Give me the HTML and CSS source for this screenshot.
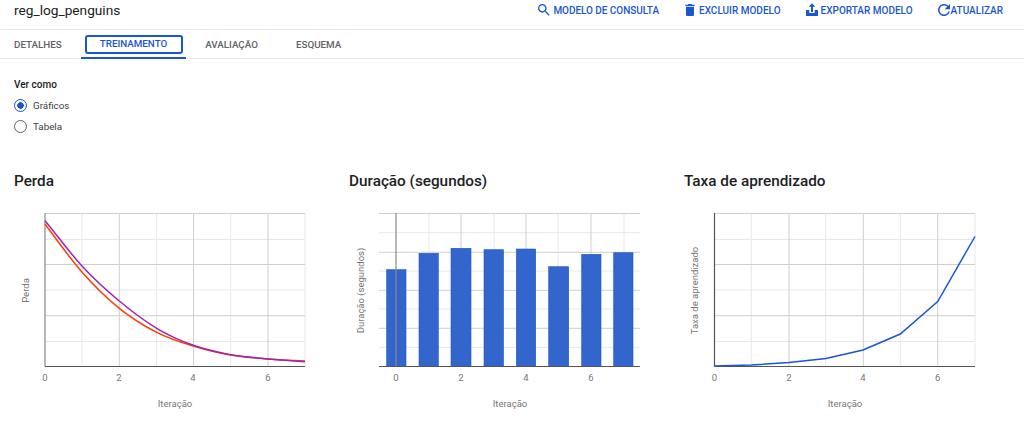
FILE: index.html
```html
<!DOCTYPE html>
<html lang="pt">
<head>
  <meta charset="UTF-8">
  <title>reg_log_penguins</title>
  <link rel="stylesheet" href="styles.css">
</head>
<body>
  <header class="topbar">
    <div class="model-name">reg_log_penguins</div>
    <div class="actions">
      <a class="action action-query"><svg viewBox="0 0 24 24"><path d="M15.5 14h-.79l-.28-.27C15.41 12.59 16 11.11 16 9.5 16 5.91 13.09 3 9.5 3S3 5.91 3 9.5 5.91 16 9.5 16c1.61 0 3.09-.59 4.23-1.57l.27.28v.79l5 4.99L20.49 19l-4.99-5zm-6 0C7.01 14 5 11.99 5 9.5S7.01 5 9.5 5 14 7.01 14 9.5 11.99 14 9.5 14z"/></svg>MODELO DE CONSULTA</a>
      <a class="action"><svg viewBox="0 0 24 24"><path d="M6 19c0 1.1.9 2 2 2h8c1.1 0 2-.9 2-2V7H6v12zM19 4h-3.5l-1-1h-5l-1 1H5v2h14V4z"/></svg>EXCLUIR MODELO</a>
      <a class="action"><svg viewBox="0 0 24 24"><path d="M12 2L7 7h3.5v8h3V7H17l-5-5zM3 12h5v4.5h8V12h5v9H3v-9z"/></svg>EXPORTAR MODELO</a>
      <a class="action action-refresh"><svg viewBox="0 0 24 24"><path d="M17.65 6.35C16.2 4.9 14.21 4 12 4c-4.42 0-7.99 3.58-7.99 8s3.57 8 7.99 8c3.73 0 6.84-2.55 7.73-6h-2.08c-.82 2.33-3.04 4-5.65 4-3.31 0-6-2.69-6-6s2.69-6 6-6c1.66 0 3.14.69 4.22 1.78L13 11h7V4l-2.35 2.35z"/></svg>ATUALIZAR</a>
    </div>
  </header>

  <nav class="tabs">
    <div class="tab tab-first">DETALHES</div>
    <div class="tab active">TREINAMENTO</div>
    <div class="tab">AVALIAÇÃO</div>
    <div class="tab">ESQUEMA</div>
  </nav>

  <section class="view-as">
    <div class="view-label">Ver como</div>
    <div class="radio-row"><span class="radio checked"></span>Gráficos</div>
    <div class="radio-row"><span class="radio"></span>Tabela</div>
  </section>

  <main class="charts">
    <section class="chart">
      <h2>Perda</h2>
      <svg class="plot" viewBox="0 0 320 210" width="320" height="210">
        <g class="grid-minor">
          <path d="M68 8.5V161.5M142.5 8.5V161.5M216.7 8.5V161.5M291 8.5V161.5"/>
          <path d="M31 34.5H291M31 85H291M31 136.5H291"/>
        </g>
        <g class="grid-major">
          <path d="M105.3 8.5V161.5M179.6 8.5V161.5M254 8.5V161.5"/>
          <path d="M31 8.5H291M31 59.5H291M31 110.7H291"/>
        </g>
        <path class="axis-y" d="M31 8V161.5"/>
        <path class="axis-x" d="M31 161.5H291"/>
        <path class="line-red" d="M31 19C43 35 55.4 52.7 67.7 66.7C80 80.7 92.8 93.2 105.3 103.3C117.8 113.4 130.4 121 142.7 127.3C155 133.6 167 137.3 179.3 141C191.6 144.7 204.2 148 216.7 150C229.2 152 241.9 153 254.3 154C266.7 155 279 155.7 291 156"/>
        <path class="line-purple" d="M31 15.7C43 30 55.4 47.3 67.7 60.7C80 74.1 92.8 85.6 105.3 96C117.8 106.4 130.4 115.9 142.7 123.3C155 130.7 167 135.9 179.3 140.3C191.6 144.7 204.2 147.4 216.7 149.7C229.2 152 241.9 152.8 254.3 154C266.7 155.2 279 155.9 291 156.7"/>
        <g class="tick">
          <text x="31" y="175.5">0</text>
          <text x="105" y="175.5">2</text>
          <text x="179" y="175.5">4</text>
          <text x="254" y="175.5">6</text>
        </g>
        <text class="axis-title" x="161" y="202">Iteração</text>
        <text class="axis-title" transform="translate(14.5 85.5) rotate(-90)">Perda</text>
      </svg>
    </section>

    <section class="chart">
      <h2>Duração (segundos)</h2>
      <svg class="plot" viewBox="0 0 320 210" width="320" height="210">
        <g class="grid-minor">
          <path d="M80 8.5V161.5M145 8.5V161.5M209 8.5V161.5M275 8.5V161.5"/>
          <path d="M30 27.7H291M30 66H291M30 104H291M30 142.3H291"/>
        </g>
        <g class="grid-major">
          <path d="M112 8.5V161.5M177 8.5V161.5M242 8.5V161.5"/>
          <path d="M30 8.5H291M30 47.3H291M30 85.3H291M30 123.3H291"/>
        </g>
        <g class="bars">
          <rect x="37.7" y="64.7" width="19.3" height="96.8"/>
          <rect x="70" y="48.3" width="19.3" height="113.2"/>
          <rect x="102" y="43.3" width="20" height="118.2"/>
          <rect x="135" y="44.7" width="19.5" height="116.8"/>
          <rect x="167.3" y="44" width="19.4" height="117.5"/>
          <rect x="199.7" y="61.7" width="20" height="99.8"/>
          <rect x="232.7" y="49.3" width="19.3" height="112.2"/>
          <rect x="264.7" y="47.7" width="19.3" height="113.8"/>
        </g>
        <path class="axis-y" d="M47 8V161.5"/>
        <path class="axis-x" d="M30 161.5H291"/>
        <g class="tick">
          <text x="47" y="175.5">0</text>
          <text x="112" y="175.5">2</text>
          <text x="177" y="175.5">4</text>
          <text x="242" y="175.5">6</text>
        </g>
        <text class="axis-title" x="161" y="202">Iteração</text>
        <text class="axis-title" transform="translate(14.5 85.5) rotate(-90)">Duração (segundos)</text>
      </svg>
    </section>

    <section class="chart">
      <h2>Taxa de aprendizado</h2>
      <svg class="plot" viewBox="0 0 320 210" width="320" height="210">
        <g class="grid-minor">
          <path d="M67.3 8.5V161.5M141.7 8.5V161.5M216.3 8.5V161.5M291 8.5V161.5"/>
          <path d="M30.5 34.5H291M30.5 85H291M30.5 136.5H291"/>
        </g>
        <g class="grid-major">
          <path d="M105 8.5V161.5M179.3 8.5V161.5M253.7 8.5V161.5"/>
          <path d="M30.5 8.5H291M30.5 59.5H291M30.5 110.7H291"/>
        </g>
        <path class="axis-y dark" d="M30.5 8V161.5"/>
        <path class="axis-x" d="M30.5 161.5H291"/>
        <path class="line-blue" d="M30.5 161L67.5 160L105 157.5L142 153.5L179 145L216.3 129L253.7 96.5L291 31.5"/>
        <g class="tick">
          <text x="30.5" y="175.5">0</text>
          <text x="105" y="175.5">2</text>
          <text x="179" y="175.5">4</text>
          <text x="253.7" y="175.5">6</text>
        </g>
        <text class="axis-title" x="161" y="202">Iteração</text>
        <text class="axis-title" transform="translate(13.5 85.5) rotate(-90)">Taxa de aprendizado</text>
      </svg>
    </section>
  </main>
</body>
</html>
```

FILE: styles.css
```css
body {
  font-family: 'Roboto', sans-serif;
  margin: 0;
  padding: 0;
  background-color: #ffffff;
  color: #202124;
  overflow: hidden;
}
.topbar {
  display: flex;
  justify-content: space-between;
  align-items: center;
  height: 20px;
  padding: 0 21px 9px 14px;
  border-bottom: 1px solid #e6e6e6;
}
.model-name {
  font-size: 13.7px;
}
.actions {
  display: flex;
  align-items: center;
  gap: 23px;
}
.action {
  display: flex;
  align-items: center;
  font-size: 10px;
  font-weight: 500;
  color: #1a56d0;
}
.action svg {
  width: 16px;
  height: 16px;
  fill: #1a56d0;
  margin-right: 1px;
}
.action-query {
  letter-spacing: -0.05px;
}
.action-refresh svg {
  width: 18px;
  height: 18px;
  margin-left: -1px;
  margin-right: -2px;
}
.tabs {
  display: flex;
  height: 28px;
  border-bottom: 1px solid #e6e6e6;
}
.tab {
  position: relative;
  display: flex;
  align-items: center;
  padding: 0 19px;
  font-size: 9.8px;
  font-weight: 500;
  color: #5f6368;
}
.tab-first {
  padding-left: 14px;
}
.tab.active {
  color: #1a56d0;
  border-bottom: 2px solid #1a56d0;
  margin-bottom: -1px;
}
.tab.active::before {
  content: "";
  position: absolute;
  left: 4px;
  right: 3px;
  top: 5px;
  bottom: 3px;
  border: 2px solid #1a56d0;
  border-radius: 3px;
}
.view-as {
  padding: 20px 14px 0;
}
.view-label {
  font-size: 10px;
  font-weight: 500;
  height: 13px;
  margin-bottom: 3px;
}
.radio-row {
  display: flex;
  align-items: center;
  height: 21px;
  font-size: 9.8px;
  color: #3c4043;
}
.radio {
  box-sizing: border-box;
  width: 13px;
  height: 13px;
  border: 1.5px solid #5f6368;
  border-radius: 50%;
  margin-right: 6px;
}
.radio.checked {
  border-color: #1a56d0;
  background: radial-gradient(circle, #1a56d0 0, #1a56d0 3px, #ffffff 3.5px);
}
.charts {
  display: flex;
  padding: 34px 0 0 14px;
}
.chart {
  width: 335px;
}
.chart h2 {
  margin: 0 0 14px;
  font-size: 15.3px;
  line-height: 20px;
  font-weight: 500;
  color: #202124;
}
.plot {
  display: block;
}
.plot path {
  fill: none;
}
.grid-minor path {
  stroke: #e8e8e8;
  stroke-width: 1;
}
.grid-major path {
  stroke: #cfcfcf;
  stroke-width: 1;
}
.axis-y {
  stroke: #888888;
  stroke-width: 1.2;
}
.axis-y.dark {
  stroke: #555555;
}
.axis-x {
  stroke: #555555;
  stroke-width: 1;
}
.bars rect {
  fill: #3366cc;
  stroke: #1a56d0;
  stroke-width: 0.6;
}
.line-red {
  stroke: #ff3d00;
  stroke-width: 1.5;
}
.line-purple {
  stroke: #9c27b0;
  stroke-width: 1.5;
}
.line-blue {
  stroke: #1a56d0;
  stroke-width: 1.5;
}
.tick text,
.axis-title {
  font-size: 9.5px;
  fill: #777777;
  text-anchor: middle;
}
```
